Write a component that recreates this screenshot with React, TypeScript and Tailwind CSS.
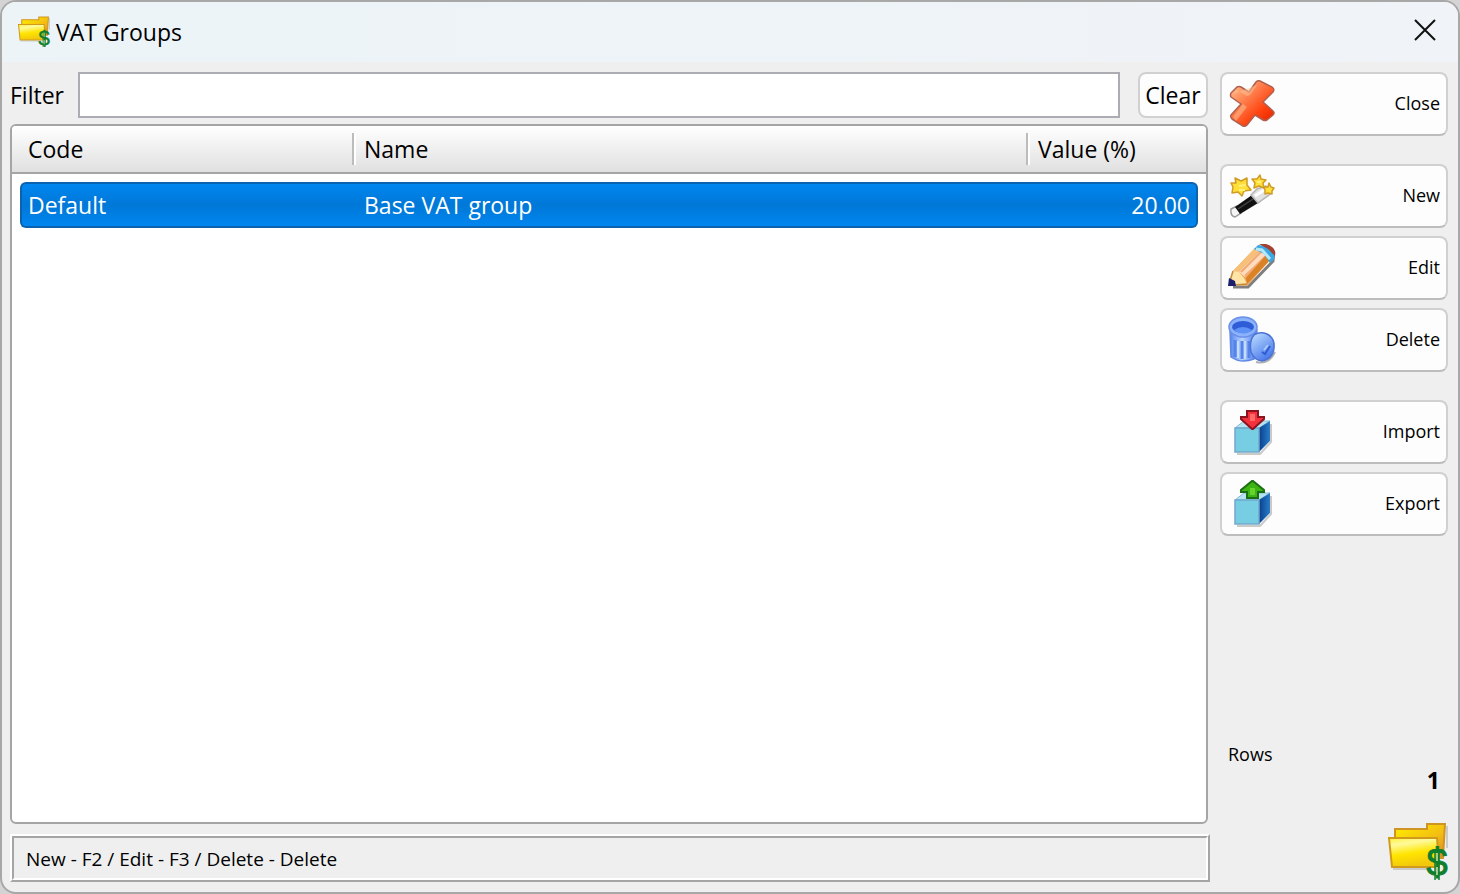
import { useState } from 'react'
import type { ReactNode } from 'react'

type VatGroup = { code: string; name: string; value: number }

const GROUPS: VatGroup[] = [{ code: 'Default', name: 'Base VAT group', value: 20 }]

// ── Icons ─────────────────────────────────────────────────────────────────────

function FolderIcon({ id, className }: { id: string; className: string }) {
  return (
    <svg viewBox="0 0 60 60" className={`overflow-visible ${className}`} aria-hidden>
      <defs>
        <linearGradient id={`${id}-back`} x1="0" y1="0" x2="1" y2="1">
          <stop offset="0" stopColor="#ffee00" />
          <stop offset="0.6" stopColor="#f3bd12" />
          <stop offset="1" stopColor="#d9822c" />
        </linearGradient>
        <linearGradient id={`${id}-front`} x1="0" y1="0" x2="0.25" y2="1">
          <stop offset="0" stopColor="#fff23c" />
          <stop offset="0.25" stopColor="#fffa9c" />
          <stop offset="0.6" stopColor="#ffe500" />
          <stop offset="1" stopColor="#f2c80c" />
        </linearGradient>
      </defs>
      <path d="M5 47h36M59 4v22" stroke="#000" strokeOpacity="0.15" strokeWidth="2" />
      <path d="M7 16V7h32V2h18l-2 34H8z" fill={`url(#${id}-back)`} stroke="#cf9424" strokeWidth="2" />
      <path d="M1 16h48l2 29H4z" fill={`url(#${id}-front)`} stroke="#d09a1c" strokeWidth="2" />
      <text
        x="49"
        y="54"
        textAnchor="middle"
        fontSize="38"
        fontFamily="'Liberation Sans', sans-serif"
        fill="#0f7f2e"
        stroke="#0f7f2e"
        strokeWidth="1"
      >
        $
      </text>
      <path d="M47 27v31M51 27v31" stroke="#0f7f2e" strokeWidth="1.5" />
      <path d="M49 31v8M49 45v8" stroke="#d9e2a8" strokeWidth="1.5" />
    </svg>
  )
}

function CloseIcon() {
  return (
    <svg viewBox="0 0 48 48" className="size-12" aria-hidden>
      <defs>
        <linearGradient id="cross" x1="0.1" y1="0.1" x2="0.8" y2="0.9">
          <stop offset="0" stopColor="#ffb888" />
          <stop offset="0.4" stopColor="#ff7a48" />
          <stop offset="0.75" stopColor="#ff4512" />
          <stop offset="1" stopColor="#f02c00" />
        </linearGradient>
      </defs>
      <path
        d="M3 13l6-6q2-1 4 0l8 5 7-10q2-2 4-1l12 6q3 2 1 5l-10 10 10 9q2 2 0 4l-6 5q-2 1-4 0l-8-5-8 10q-2 2-4 1L4 39q-2-2-1-4l10-11-10-7q-1-2 0-4z"
        fill="url(#cross)"
        stroke="#b0604e"
        strokeWidth="1.5"
        strokeLinejoin="round"
      />
      <path d="M5 37l10-13 4 3-11 14zM5 14l4-4 10 6 3-1 7-10" fill="#ffc59a" fillOpacity="0.5" />
    </svg>
  )
}

function WandIcon() {
  return (
    <svg viewBox="0 0 48 48" className="size-12" aria-hidden>
      <path d="M7 43l15-9 20-13" stroke="#000" strokeOpacity="0.12" strokeWidth="4" fill="none" />
      <path d="M3 37l6-3 4 7-6 4q-5-1-4-8z" fill="#f4f4f4" stroke="#9a9a9a" strokeWidth="1.5" />
      <path d="M7 35l17-12 6 8-18 11z" fill="#111" />
      <path d="M10 37l15-10" stroke="#444" strokeWidth="1.5" />
      <path d="M23 23l6-6 9-3 4 2v6l-12 9z" fill="#e3e3e3" stroke="#b5b5b5" strokeWidth="1.5" />
      <path d="M27 24l9-6" stroke="#fff" strokeWidth="3" />
      <g fill="#ffdf38" stroke="#d19c24" strokeWidth="1.5" strokeLinejoin="round">
        <path d="M7 6l6 3 6-3 0 7 4 5-7 1-2 5-4-4-6 1 1-6-2-4 5 0z" />
        <path d="M32 3l1 4 5 1-3 3 1 5-5-2-5 2 1-5-3-4 5 0z" />
        <path d="M41 11l2 4 3 1-2 3 0 3-4-1-3 1 0-4-1-3 4 0z" />
      </g>
      <path d="M11 14l7-1M11 18h6M29 10h4" stroke="#fff27a" strokeWidth="2" />
    </svg>
  )
}

function PencilIcon() {
  return (
    <svg viewBox="0 0 48 48" className="size-12" aria-hidden>
      <path d="M5 43h15l25-26 1-9" fill="none" stroke="#000" strokeOpacity="0.5" strokeWidth="3" />
      <path d="M5 27L27 4l9 3 7 8-23 26-5 1-8-3z" fill="#f0a558" />
      <path d="M5 27L27 4l6 1L11 29z" fill="#f6c078" />
      <path d="M11 28L33 6l5 5-21 22z" fill="#ffdcbc" />
      <path d="M13 28L33 8M17 32L38 12" stroke="#f2a878" strokeWidth="2" />
      <path d="M19 40l24-25-5-4-20 23z" fill="#d98226" />
      <path d="M26 5l4-4 8 1 8 8v5l-4 4-6-9z" fill="#3aa8e2" />
      <path d="M28 5l6 1 8 9" fill="none" stroke="#b6e7fa" strokeWidth="3" />
      <path d="M31 0h7q7 2 9 7v5l-7-7z" fill="#a44232" />
      <path d="M5 27l6 1 5 6 3 6-13 1-4-4z" fill="#ffe4a6" />
      <path d="M5 27L2 37l5 4 12-1" fill="none" stroke="#c48a38" strokeWidth="1.5" />
      <path d="M1 34l6 3 1 5H0z" fill="#1c1f6e" />
    </svg>
  )
}

function TrashIcon() {
  return (
    <svg viewBox="0 0 48 48" className="size-12" aria-hidden>
      <defs>
        <linearGradient id="bin" x1="0" y1="0" x2="1" y2="0">
          <stop offset="0" stopColor="#5586ee" />
          <stop offset="0.45" stopColor="#b9d4ff" />
          <stop offset="1" stopColor="#4779e6" />
        </linearGradient>
        <linearGradient id="lid" x1="0.2" y1="0" x2="0.8" y2="1">
          <stop offset="0" stopColor="#b8daff" />
          <stop offset="1" stopColor="#3f6fe8" />
        </linearGradient>
      </defs>
      <path d="M2 14l1 27q10 7 23 2l3-29z" fill="url(#bin)" stroke="#5f88e4" strokeWidth="1.5" />
      <path d="M7 24v17M14 25v18M21 25v17" stroke="#5583ea" strokeWidth="3" />
      <path d="M10 25v17M17 25v18" stroke="#c6dcff" strokeWidth="2" />
      <ellipse cx="15" cy="11" rx="14" ry="10" fill="#8bb2fa" stroke="#6a90ea" strokeWidth="1.5" />
      <ellipse cx="15" cy="11" rx="11" ry="6" fill="#2f5dd8" />
      <path d="M6 14q9-6 18 0-8 7-18 0z" fill="#5f92f6" />
      <path d="M28 46q13 3 19-10" fill="none" stroke="#000" strokeOpacity="0.3" strokeWidth="2" />
      <path
        d="M26 19q6-4 13-1 8 4 7 14-1 11-12 13-8-1-11-9-2-11 3-17z"
        fill="url(#lid)"
        stroke="#4c72d6"
        strokeWidth="1.5"
      />
      <path d="M34 36l3 2 5-8" fill="none" stroke="#2f5cd2" strokeWidth="2" />
      <path d="M36 34l4-5" stroke="#a9ccff" strokeWidth="2" />
    </svg>
  )
}

function CubeIcon({ children }: { children: ReactNode }) {
  return (
    <svg viewBox="0 0 48 48" className="size-12" aria-hidden>
      <defs>
        <linearGradient id="cube-side" x1="0" y1="0" x2="1" y2="0">
          <stop offset="0" stopColor="#08408f" />
          <stop offset="1" stopColor="#2a7cc8" />
        </linearGradient>
      </defs>
      <path d="M9 46h23l11-12V16" fill="none" stroke="#000" strokeOpacity="0.2" strokeWidth="2" />
      <path d="M7 20l9-7h26L31 20z" fill="#b4e4f0" stroke="#86b8d4" strokeWidth="1" />
      <path d="M31 20l11-7v20L31 44z" fill="url(#cube-side)" />
      <path d="M7 20h24v24H7z" fill="#77cde2" stroke="#72a8cc" strokeWidth="1.5" />
      {children}
    </svg>
  )
}

function ImportIcon() {
  return (
    <CubeIcon>
      <path d="M19 3h11v6h6v2L25 21h-1L13 11V9h6z" fill="#f5323c" stroke="#8c1420" strokeWidth="2" />
      <path d="M22 6h5v7h-5z" fill="#ff6a6a" />
    </CubeIcon>
  )
}

function ExportIcon() {
  return (
    <CubeIcon>
      <path d="M19 18h11v-6h6v-2L25 1h-1L13 10v2h6z" fill="#3cb414" stroke="#1c6e14" strokeWidth="2" />
      <path d="M22 8h5v7h-5z" fill="#66d42c" />
    </CubeIcon>
  )
}

// ── Side button ───────────────────────────────────────────────────────────────

function ActionButton({ label, icon }: { label: string; icon: ReactNode }) {
  return (
    <button
      type="button"
      className="flex h-16 w-full items-center justify-between rounded-lg border-2 border-[#d0d0d0] border-b-[#bdbdbd] bg-[#fdfdfd] px-1.5 text-[18px] leading-6 text-black hover:bg-[#e5f1fb]"
    >
      {icon}
      <span className="pb-0.5">{label}</span>
    </button>
  )
}

// ── Window ────────────────────────────────────────────────────────────────────

export default function App() {
  const [filter, setFilter] = useState('')
  const rows = GROUPS.filter((g) =>
    `${g.code} ${g.name}`.toLowerCase().includes(filter.toLowerCase())
  )

  return (
    <div className="flex min-h-screen bg-[#d4d4d4] font-['Open_Sans','Noto_Sans',sans-serif] text-[23px] leading-8 text-black">
      <div className="flex flex-1 flex-col overflow-hidden rounded-2xl border-2 border-[#a8a8a8] bg-[#efefef]">

        {/* Title bar */}
        <header className="flex h-[60px] items-center bg-gradient-to-r from-[#ecf4f8] to-[#f0f3f7] pr-[18px] pl-4">
          <FolderIcon id="title" className="size-8" />
          <h1 className="ml-1.5 flex-1">VAT Groups</h1>
          <button type="button" aria-label="Close window" className="p-1 pb-2">
            <svg viewBox="0 0 22 22" className="size-[22px]" aria-hidden>
              <path d="M1 1l20 20M21 1L1 21" stroke="#111" strokeWidth="2" />
            </svg>
          </button>
        </header>

        <div className="flex flex-1 gap-3 py-2.5 pr-2.5 pl-2">
          <main className="flex min-w-0 flex-1 flex-col">
            {/* Filter */}
            <div className="flex h-[46px] items-stretch">
              <label htmlFor="filter" className="w-[68px] self-center">
                Filter
              </label>
              <input
                id="filter"
                value={filter}
                onChange={(e) => setFilter(e.target.value)}
                className="min-w-0 flex-1 border-2 border-[#abadb3] bg-white px-2 outline-none"
              />
              <button
                type="button"
                onClick={() => setFilter('')}
                className="ml-[18px] w-[70px] rounded-lg border-2 border-[#d0d0d0] bg-[#fdfdfd]"
              >
                Clear
              </button>
            </div>

            {/* Groups */}
            <div className="mt-1.5 flex-1 overflow-hidden rounded-md border-2 border-[#a5a5a5] bg-white">
              <table className="w-full table-fixed border-separate border-spacing-0 text-left">
                <thead>
                  <tr className="h-12">
                    <th className="w-[340px] border-b-2 border-[#a5a5a5] bg-gradient-to-b from-white to-[#e0e0e0] p-0 pl-4 font-normal">
                      Code
                    </th>
                    <th className="border-b-2 border-[#a5a5a5] bg-gradient-to-b from-white to-[#e0e0e0] p-0 font-normal">
                      <div className="border-l-2 border-[#bcbcbc] pl-2.5 shadow-[inset_2px_0_0_#fff]">Name</div>
                    </th>
                    <th className="w-[180px] border-b-2 border-[#a5a5a5] bg-gradient-to-b from-white to-[#e0e0e0] p-0 font-normal">
                      <div className="border-l-2 border-[#bcbcbc] pl-2.5 shadow-[inset_2px_0_0_#fff]">Value (%)</div>
                    </th>
                  </tr>
                </thead>
                <tbody className="text-white">
                  {rows.map((g) => (
                    <tr key={g.code}>
                      <td className="p-0 pt-2 pl-2">
                        <div className="h-[46px] rounded-l-md border-y-2 border-l-2 border-[#0b62ae] bg-gradient-to-b from-[#0086f0] via-[#0078d7] to-[#0086f0] pl-1.5 leading-[42px]">
                          {g.code}
                        </div>
                      </td>
                      <td className="p-0 pt-2">
                        <div className="h-[46px] border-y-2 border-[#0b62ae] bg-gradient-to-b from-[#0086f0] via-[#0078d7] to-[#0086f0] pl-3 leading-[42px]">
                          {g.name}
                        </div>
                      </td>
                      <td className="p-0 pt-2 pr-2">
                        <div className="h-[46px] rounded-r-md border-y-2 border-r-2 border-[#0b62ae] bg-gradient-to-b from-[#0086f0] via-[#0078d7] to-[#0086f0] pr-1.5 text-right leading-[42px]">
                          {g.value.toFixed(2)}
                        </div>
                      </td>
                    </tr>
                  ))}
                </tbody>
              </table>
            </div>

            {/* Shortcut hints */}
            <footer className="mt-2.5 -mr-0.5 border-2 border-t-white border-r-[#a5a5a5] border-b-[#a5a5a5] border-l-white">
              <div className="h-11 border-2 border-t-[#a5a5a5] border-r-white border-b-white border-l-[#a5a5a5] pl-3 text-[19px] leading-[42px]">
                New - F2 / Edit - F3 / Delete - Delete
              </div>
            </footer>
          </main>

          <aside className="flex w-[228px] flex-col">
            <ActionButton label="Close" icon={<CloseIcon />} />
            <div className="mt-7 flex flex-col gap-2">
              <ActionButton label="New" icon={<WandIcon />} />
              <ActionButton label="Edit" icon={<PencilIcon />} />
              <ActionButton label="Delete" icon={<TrashIcon />} />
            </div>
            <div className="mt-7 flex flex-col gap-2">
              <ActionButton label="Import" icon={<ImportIcon />} />
              <ActionButton label="Export" icon={<ExportIcon />} />
            </div>

            <div className="mt-auto px-2 text-[18px] leading-6">Rows</div>
            <div className="px-2 text-right font-bold leading-7">{rows.length}</div>
            <FolderIcon id="corner" className="mt-7 size-[60px] self-end" />
          </aside>
        </div>
      </div>
    </div>
  )
}
